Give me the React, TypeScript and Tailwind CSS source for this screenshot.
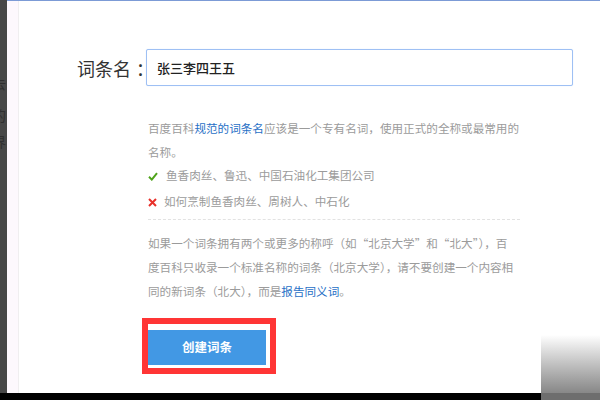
import React from "react";

const cjk = { fontFamily: '"Noto Sans CJK SC", "Noto Sans", sans-serif' };

const CheckIcon = () => (
  <svg width="10" height="9" viewBox="0 0 10 9" className="shrink-0">
    <path d="M1 4.8 L3.8 7.6 L9 1.2" fill="none" stroke="#4fa31a" strokeWidth="2" />
  </svg>
);

const CrossIcon = () => (
  <svg width="9" height="9" viewBox="0 0 9 9" className="shrink-0">
    <path d="M1 1 L8 8 M8 1 L1 8" fill="none" stroke="#e8302a" strokeWidth="2" />
  </svg>
);

const App = () => {
  return (
    <div className="relative w-[600px] h-[400px] flex flex-col overflow-hidden bg-white" style={cjk}>
      <div className="flex flex-1 min-h-0">
        {/* dark page edge behind the dialog */}
        <div className="w-[7px] bg-[#474747] overflow-hidden flex flex-col text-[14px] leading-none text-[#2f2f2f]">
          <span className="ml-[-8px] mt-[76px]">去</span>
          <span className="ml-[-8px] mt-[18px]">的</span>
          <span className="ml-[-8px] mt-[12px]">界</span>
        </div>
        <div className="flex-1 flex border-t border-[#7c9bd6]">
          <div className="w-[12px] bg-[#fdf8fd] border-r border-[#f0eef0]" />
          <main className="flex-1 pl-[58px]">
            <div className="flex items-center mt-[48px]">
              <div className="w-[69px] shrink-0 flex items-center whitespace-nowrap text-[18px] leading-none text-[#333]">
                <span>词条名</span>
                <span className="ml-[5px]">：</span>
              </div>
              <div className="relative w-[427px] h-[37px] flex items-center pl-[10px] bg-white border border-[#9ec0f4] rounded-[2px] shadow-[0_0_1px_#c8dcfa]">
                <span className="text-[13px] font-medium text-[#222]">张三李四王五</span>
              </div>
            </div>

            <div className="ml-[71px] w-[372px] mt-[30px] text-[11.6px] text-[#9b9b9b]">
              <p className="leading-[24px] whitespace-nowrap">
                百度百科<span className="text-[#1f6fc6]">规范的词条名</span>应该是一个专有名词，使用正式的全称或最常用的
                <br />
                名称。
              </p>
              <div className="flex items-center h-[24px]">
                <CheckIcon />
                <span className="ml-[8px]">鱼香肉丝、鲁迅、中国石油化工集团公司</span>
              </div>
              <div className="flex items-center h-[24px] mt-[2px]">
                <CrossIcon />
                <span className="ml-[7px]">如何烹制鱼香肉丝、周树人、中石化</span>
              </div>
              <div className="mt-[5px] border-t border-dashed border-[#e2e2e2]" />
              <p className="mt-[11px] leading-[24px] whitespace-nowrap">
                如果一个词条拥有两个或更多的称呼（如“北京大学”和“北大”），百
                <br />
                度百科只收录一个标准名称的词条（北京大学），请不要创建一个内容相
                <br />
                同的新词条（北大），而是<span className="text-[#1f6fc6]">报告同义词</span>。
              </p>
            </div>

            <div className="ml-[65px] mt-[15px] inline-flex border-[6px] border-[#ff3535] pt-[6px] pr-[4px] pb-[3px]">
              <div className="w-[118px] h-[35px] bg-[#4298e4] flex items-center justify-center text-white text-[12.5px] font-bold">
                创建词条
              </div>
            </div>
          </main>
        </div>
      </div>
      <div className="h-[7px] flex">
        <div className="w-[541px] bg-black" />
        <div className="flex-1 bg-[#6e6e6e]" />
      </div>
      {/* corner shading over the dialog */}
      <div className="absolute right-0 bottom-[7px] w-[59px] h-[58px] bg-gradient-to-b from-white to-[#7a7a7a] opacity-90" />
    </div>
  );
};

export default App;
